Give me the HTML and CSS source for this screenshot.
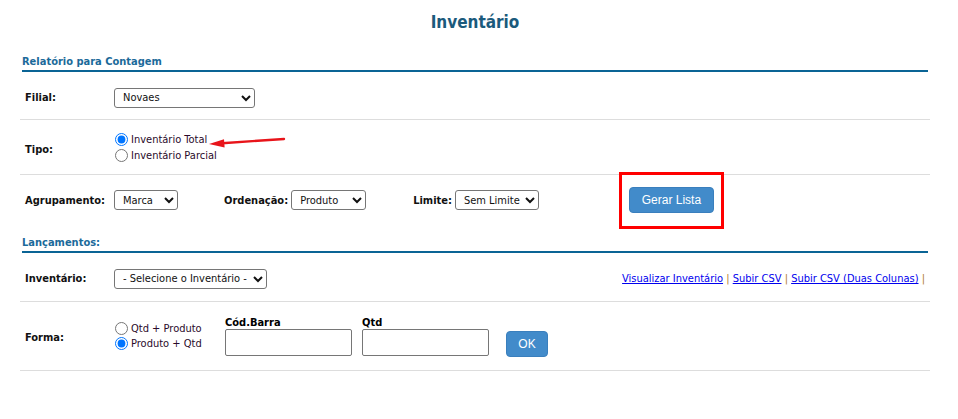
FILE: index.html
```html
<!DOCTYPE html>
<html lang="pt">
<head>
<meta charset="utf-8">
<title>Inventário</title>
<link rel="stylesheet" href="styles.css">
</head>
<body>
<div class="page">
  <h1 class="title">Inventário</h1>

  <h2 class="section">Relatório para Contagem</h2>

  <div class="row row-filial">
    <div class="label">Filial:</div>
    <div class="field">
      <select class="sel sel-filial"><option>Novaes</option></select>
    </div>
  </div>

  <div class="row row-tipo">
    <div class="label label-tipo">Tipo:</div>
    <div class="field radios radios-tipo">
      <label class="radio annotated"><input type="radio" name="tipo" checked>Inventário Total
        <svg class="arrow" width="80" height="14" viewBox="0 0 80 14">
          <path d="M14 8.2 L76 4" stroke="#e8141a" stroke-width="2.4" stroke-linecap="round" fill="none"/>
          <path d="M1 9 L16 4.2 L16.6 12.4 Z" fill="#e8141a"/>
        </svg>
      </label>
      <label class="radio"><input type="radio" name="tipo">Inventário Parcial</label>
    </div>
  </div>

  <div class="row row-agrup">
    <div class="label">Agrupamento:</div>
    <div class="field inline">
      <select class="sel sel-marca"><option>Marca</option></select>
      <span class="label sub sub-ord">Ordenação:</span>
      <select class="sel sel-prod"><option>Produto</option></select>
      <span class="label sub sub-lim">Limite:</span>
      <select class="sel sel-lim"><option>Sem Limite</option></select>
      <span class="highlight"><button class="btn btn-gerar">Gerar Lista</button></span>
    </div>
  </div>

  <h2 class="section section-lanc">Lançamentos:</h2>

  <div class="row row-inv">
    <div class="label">Inventário:</div>
    <div class="field inline">
      <select class="sel sel-inv"><option>- Selecione o Inventário -</option></select>
      <div class="links">
        <a href="#">Visualizar Inventário</a> <span class="pipe">|</span>
        <a href="#">Subir CSV</a> <span class="pipe">|</span>
        <a href="#">Subir CSV (Duas Colunas)</a> <span class="pipe">|</span>
      </div>
    </div>
  </div>

  <div class="row row-forma">
    <div class="label">Forma:</div>
    <div class="field inline forma-fields">
      <div class="radios radios-forma">
        <label class="radio"><input type="radio" name="forma">Qtd + Produto</label>
        <label class="radio"><input type="radio" name="forma" checked>Produto + Qtd</label>
      </div>
      <div class="fld fld-cod">
        <div class="fld-label">Cód.Barra</div>
        <input type="text" class="txt">
      </div>
      <div class="fld fld-qtd">
        <div class="fld-label">Qtd</div>
        <input type="text" class="txt">
      </div>
      <button class="btn btn-ok">OK</button>
    </div>
  </div>
</div>
</body>
</html>
```

FILE: styles.css
```css
html, body {
  margin: 0;
  padding: 0;
  background: #fff;
}
body {
  font-family: "DejaVu Sans Condensed", "DejaVu Sans", sans-serif;
  font-size: 11px;
  color: #000;
}
.page {
  width: 910px;
  margin-left: 20px;
}
.title {
  margin: 0;
  padding-top: 12px;
  font-size: 17px;
  line-height: 20px;
  text-align: center;
  color: #1b5a7c;
  font-weight: bold;
}
.section {
  margin: 23px 2px 0 2px;
  padding: 0 0 1px 0;
  font-size: 11px;
  line-height: 14px;
  font-weight: bold;
  color: #1b6a9a;
  border-bottom: 2px solid #0a6495;
}
.section-lanc {
  margin-top: 11px;
}
.row {
  display: flex;
  align-items: center;
  border-bottom: 1px solid #dddddd;
  box-sizing: border-box;
}
.row-filial { height: 48px; padding-top: 4px; }
.row-tipo { height: 55px; padding-top: 1px; }
.row-agrup { height: 50px; border-bottom: none; }
.row-inv { height: 49px; padding-top: 3px; }
.row-forma { height: 69px; padding-top: 2px; }

.label {
  font-weight: bold;
  color: #111;
}
.row > .label {
  width: 89px;
  padding-left: 5px;
  flex: none;
}
.label-tipo {
  margin-top: 3px;
}
.field {
  flex: 1;
}
.inline {
  display: flex;
  align-items: center;
}
.sel {
  font-family: "DejaVu Sans Condensed", "DejaVu Sans", sans-serif;
  font-size: 11px;
  height: 20px;
  border: 1px solid #767676;
  border-radius: 3px;
  background: #fff;
  color: #111;
  padding: 0 2px 0 4px;
  margin: 0;
  box-sizing: border-box;
}
.sel-filial { width: 141px; }
.sel-marca { width: 64px; }
.sel-prod { width: 75px; }
.sel-lim { width: 84px; }
.sel-inv { width: 153px; }
.sub-ord { margin-left: 46px; margin-right: 3px; }
.sub-lim { margin-left: 47px; margin-right: 3px; }

.radios {
  display: flex;
  flex-direction: column;
}
.radio {
  display: flex;
  align-items: center;
  height: 15px;
  color: #2a0a2a;
  position: relative;
}
.radios-tipo .radio {
  height: 16px;
}
.radio input {
  margin: 0 3px 0 1px;
  width: 13px;
  height: 13px;
}
.annotated .arrow {
  position: absolute;
  left: 94px;
  top: 3px;
}

.btn {
  font-family: "Liberation Sans", Arial, sans-serif;
  font-size: 12px;
  color: #fff;
  background: #428bca;
  border: 1px solid #3a7fbd;
  border-radius: 4px;
  height: 26px;
  padding: 0;
  cursor: pointer;
}
.highlight {
  position: relative;
  margin-left: 90px;
  display: inline-flex;
}
.highlight::after {
  content: "";
  position: absolute;
  left: -10px;
  top: -15px;
  right: -10px;
  bottom: -16px;
  border: 3px solid #ff0000;
}
.btn-gerar {
  width: 85px;
  margin: 0;
}

.links {
  margin-left: auto;
  margin-right: 5px;
}
.links a {
  color: #0000ee;
  text-decoration: underline;
}
.pipe {
  color: #b07a30;
}

.forma-fields {
  align-self: stretch;
  align-items: flex-start;
}
.radios-forma {
  width: 111px;
  margin-top: 17px;
}
.fld {
  display: flex;
  flex-direction: column;
  margin-top: 12px;
}
.fld-label {
  font-weight: bold;
  line-height: 13px;
  height: 13px;
}
.txt {
  width: 127px;
  height: 27px;
  box-sizing: border-box;
  border: 1px solid #767676;
  border-radius: 2px;
  margin: 0;
}
.fld-qtd { margin-left: 10px; }
.btn-ok {
  width: 42px;
  margin-left: 17px;
  margin-top: 27px;
}
```
